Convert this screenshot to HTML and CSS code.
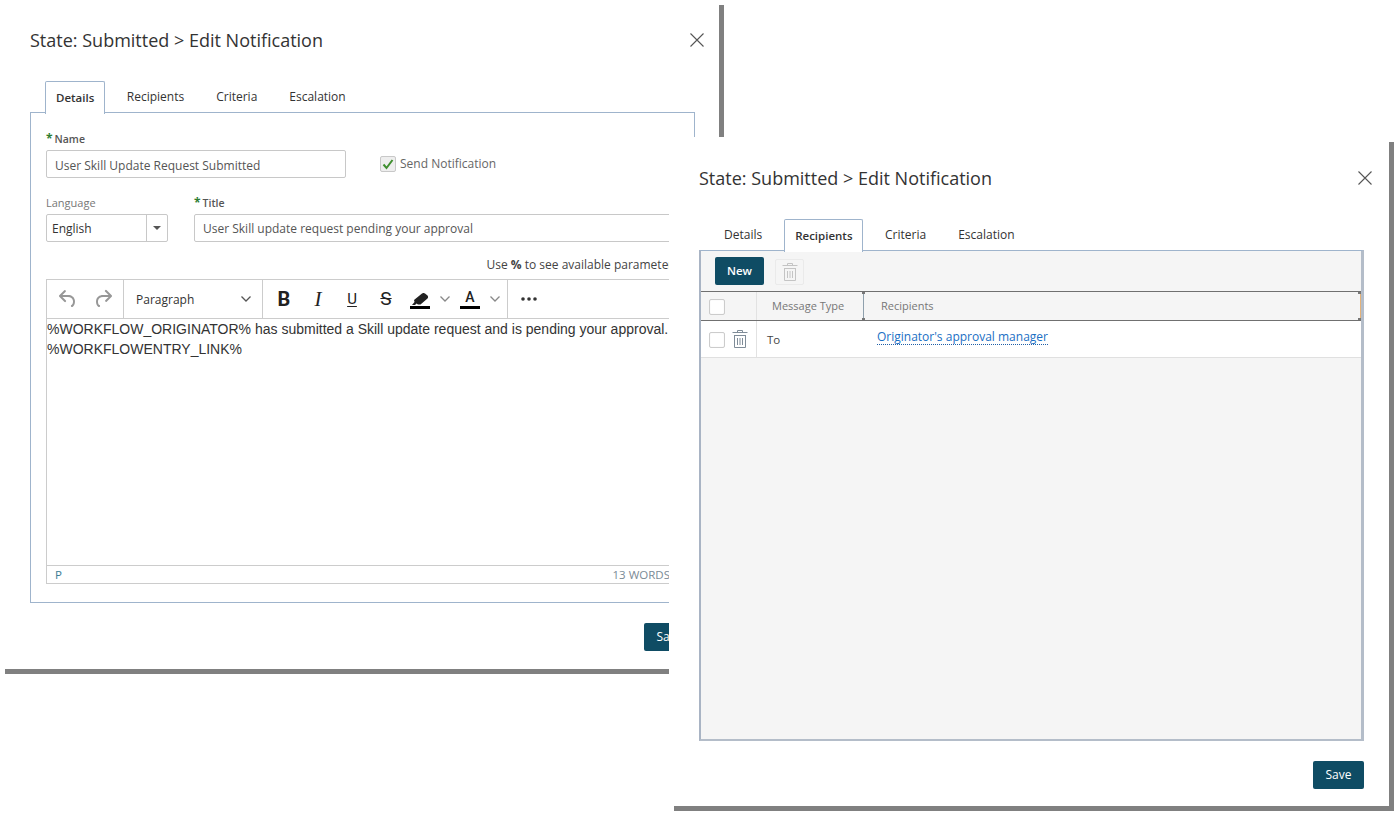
FILE: index.html
```html
<!DOCTYPE html>
<html lang="en">
<head>
<meta charset="utf-8">
<title>Edit Notification</title>
<link rel="stylesheet" href="styles.css">
</head>
<body>
<section class="window window-details">
  <header class="win-head">
    <h1 class="win-title">State: Submitted &gt; Edit Notification</h1>
    <svg class="close" viewBox="0 0 14 14" width="14" height="14"><path d="M.5.5l13 13M13.5.5l-13 13"/></svg>
  </header>
  <nav class="tabs">
    <span class="tab active">Details</span>
    <span class="tab">Recipients</span>
    <span class="tab">Criteria</span>
    <span class="tab">Escalation</span>
  </nav>
  <div class="panel panel-form">
    <label class="field-label req-label"><b class="star">*</b>Name</label>
    <div class="name-row">
      <div class="input name-input">User Skill Update Request Submitted</div>
      <div class="check-wrap">
        <span class="checkbox"><svg viewBox="0 0 16 16" width="16" height="16"><path class="tick" d="M3.500 8.500l3 3.500 6-8"/></svg></span>
        <span class="check-label">Send Notification</span>
      </div>
    </div>
    <div class="lang-row">
      <div class="lang-col">
        <label class="field-label plain-label">Language</label>
        <div class="select">
          <span class="select-value">English</span>
          <span class="select-btn"><i class="caret"></i></span>
        </div>
      </div>
      <div class="title-col">
        <label class="field-label req-label"><b class="star">*</b>Title</label>
        <div class="input title-input">User Skill update request pending your approval</div>
      </div>
    </div>
    <p class="hint">Use <b>%</b> to see available parameters</p>
    <div class="editor">
      <div class="toolbar">
        <div class="tool-group history">
          <svg class="ico muted" viewBox="0 0 24 24" width="24" height="24"><path d="M6.400 8H12c3.700 0 6.200 2 6.800 5.100.6 2.700-.4 5.600-2.300 6.800a1 1 0 0 1-1-1.800c1.100-.6 1.800-2.700 1.400-4.600-.5-2.100-2.100-3.500-4.900-3.500H6.400l3.300 3.300a1 1 0 1 1-1.400 1.400l-5-5a1 1 0 0 1 0-1.400l5-5a1 1 0 0 1 1.400 1.400L6.400 8z"/></svg>
          <svg class="ico muted" viewBox="0 0 24 24" width="24" height="24"><path d="M17.600 10H12c-2.800 0-4.400 1.400-4.900 3.500-.4 2 .3 4 1.400 4.600a1 1 0 1 1-1 1.800c-2-1.200-2.900-4.100-2.300-6.800.6-3 3-5.100 6.800-5.100h5.600l-3.300-3.300a1 1 0 1 1 1.400-1.400l5 5a1 1 0 0 1 0 1.400l-5 5a1 1 0 0 1-1.400-1.400l3.300-3.300z"/></svg>
        </div>
        <div class="tool-group block-select">
          <span>Paragraph</span>
          <svg class="chev" viewBox="0 0 10 6" width="10" height="6"><path d="M.5.5L5 5 9.500.5"/></svg>
        </div>
        <div class="tool-group format">
          <span class="fmt fmt-b">B</span>
          <span class="fmt fmt-i">I</span>
          <span class="fmt fmt-u">U</span>
          <span class="fmt fmt-s">S</span>
          <span class="color-tool first-color">
            <span class="swatch">
              <svg viewBox="0 0 18 12" width="18" height="12"><path class="marker" d="M1 12l2.500-3-.5-2L11 .5c1-.7 2-.7 3 0l2.500 2c.8.8.8 2 0 3L9.500 11.500H7L5.500 10.500 4 12z"/></svg>
            </span>
            <svg class="chev light" viewBox="0 0 10 6" width="10" height="6"><path d="M.5.5L5 5 9.500.5"/></svg>
          </span>
          <span class="color-tool">
            <span class="swatch letter">A</span>
            <svg class="chev light" viewBox="0 0 10 6" width="10" height="6"><path d="M.5.5L5 5 9.500.5"/></svg>
          </span>
        </div>
        <div class="tool-group more">
          <svg viewBox="0 0 16 4" width="16" height="4"><circle cx="2" cy="2" r="1.800"/><circle cx="8" cy="2" r="1.800"/><circle cx="14" cy="2" r="1.800"/></svg>
        </div>
      </div>
      <div class="edit-body">
        <p>%WORKFLOW_ORIGINATOR% has submitted a Skill update request and is pending your approval.</p>
        <p>%WORKFLOWENTRY_LINK%</p>
      </div>
      <div class="statusbar"><span class="path">P</span><span class="words">13 WORDS</span></div>
    </div>
  </div>
  <div class="actions"><button class="btn">Save</button></div>
</section>

<section class="window window-recipients">
  <header class="win-head">
    <h1 class="win-title">State: Submitted &gt; Edit Notification</h1>
    <svg class="close" viewBox="0 0 14 14" width="14" height="14"><path d="M.5.5l13 13M13.5.5l-13 13"/></svg>
  </header>
  <nav class="tabs">
    <span class="tab">Details</span>
    <span class="tab active">Recipients</span>
    <span class="tab">Criteria</span>
    <span class="tab">Escalation</span>
  </nav>
  <div class="panel panel-grid">
    <div class="grid-tools">
      <button class="btn btn-new">New</button>
      <span class="icon-btn">
        <svg class="trash faint" viewBox="0 0 16 18" width="16" height="18"><path d="M5.500 2.500v-2h5v2M.5 2.500h15M2 5.500h12M2.500 5.500v12h11v-12M5.500 8v7M8 8v7M10.500 8v7"/></svg>
      </span>
    </div>
    <div class="grid-head">
      <span class="cell cell-check"><i class="box"></i></span>
      <span class="cell cell-type">Message Type</span>
      <span class="cell cell-rec">Recipients</span>
    </div>
    <div class="grid-row">
      <span class="cell cell-check">
        <i class="box"></i>
        <svg class="trash" viewBox="0 0 16 18" width="16" height="18"><path d="M5.500 2.500v-2h5v2M.5 2.500h15M2 5.500h12M2.500 5.500v12h11v-12M5.500 8v7M8 8v7M10.500 8v7"/></svg>
      </span>
      <span class="cell cell-type">To</span>
      <span class="cell cell-rec"><a class="rec-link">Originator's approval manager</a></span>
    </div>
  </div>
  <div class="actions"><button class="btn">Save</button></div>
</section>
</body>
</html>
```
FILE: styles.css
```css
* { box-sizing: border-box; }
html, body { margin: 0; height: 100%; }
body { background: #fff; font-family: "Open Sans", "Liberation Sans", sans-serif; color: #333; overflow: hidden; }

.window { position: absolute; background: #fff; box-shadow: 5px 5px 0 #808080; display: flex; flex-direction: column; overflow: hidden; }
.window-details { left: 0; top: 0; width: 719px; height: 669px; }
.window-recipients { left: 669px; top: 137px; width: 720px; height: 669px; }

.win-head { height: 81px; padding: 0 15px 0 30px; display: flex; justify-content: space-between; align-items: flex-start; flex: none; }
.window-recipients .win-head { height: 82px; padding: 1px 17px 0 30px; }
.win-title { margin: 27px 0 0; font-size: 18px; line-height: 26px; font-weight: 400; color: #333; }
.close { margin-top: 33px; }
.close path { stroke: #555; fill: none; stroke-width: 1.100; }

.tabs { display: flex; height: 32px; padding-left: 39px; flex: none; position: relative; z-index: 1; }
.tab { font-size: 12px; line-height: 30px; padding: 0 15px; color: #333; border: 1px solid transparent; border-bottom: 0; height: 32px; }
.tab.active { font-size: 11.500px; font-weight: 600; padding: 0 9.500px 0 10px; margin: 0 6px; border-color: #9fb4cc; background: #fff; border-radius: 2px 2px 0 0; height: 33px; line-height: 32px; }

.panel { border: 1px solid #9fb4cc; margin: -1px 24px 0 30px; flex: none; }
.panel-form { height: 491px; padding: 16px 15px 0; width: 665px; }
.field-label { display: block; font-size: 10.500px; line-height: 20px; height: 20px; }
.req-label { font-weight: 600; color: #555; }
.star { color: #2e7d32; font-weight: 700; margin-right: 2px; font-size: 12px; }
.plain-label { color: #777; font-size: 11px; }

.input { height: 28px; border: 1px solid #c8c8c8; border-radius: 2px; font-size: 12px; line-height: 27px; padding: 0 8px; color: #555; background: #fff; white-space: nowrap; }
.name-row { display: flex; align-items: flex-start; margin-top: 1px; }
.name-input { width: 300px; flex: none; line-height: 29px; }
.check-wrap { display: flex; align-items: center; margin: 5px 0 0 34px; }
.checkbox { width: 16px; height: 16px; border: 1px solid #c8c8c8; border-radius: 2px; background: #eee; display: block; }
.checkbox svg { display: block; margin: -1px; }
.tick { fill: none; stroke: #3f8f2f; stroke-width: 2; }
.check-label { font-size: 12px; color: #666; margin: 1px 0 0 4px; line-height: 16px; }

.lang-row { display: flex; margin-top: 15px; }
.lang-col { width: 122px; flex: none; }
.title-col { margin-left: 26px; flex: none; width: 485px; }
.select { height: 28px; margin-top: 1px; border: 1px solid #c8c8c8; border-radius: 2px; display: flex; font-size: 12px; line-height: 27px; color: #333; }
.select-value { flex: 1; padding-left: 5px; }
.select-btn { width: 21px; border-left: 1px solid #c8c8c8; display: flex; align-items: center; justify-content: center; }
.caret { width: 0; height: 0; border: 4px solid transparent; border-top-color: #555; border-bottom: 0; }
.title-input { margin-top: 1px; }

.hint { margin: 14px 0 0; height: 23px; font-size: 12px; line-height: 17px; color: #444; text-align: right; white-space: nowrap; }

.editor { height: 305px; border: 1px solid #ccc; display: flex; flex-direction: column; }
.toolbar { height: 39px; border-bottom: 1px solid #ccc; display: flex; flex: none; }
.tool-group { display: flex; align-items: center; border-right: 1px solid #ccc; flex: none; }
.history { width: 77px; padding-left: 9px; gap: 11px; }
.ico { fill: #757575; flex: none; }
.muted { opacity: .75; }
.block-select { width: 139px; padding: 0 11px 0 12px; justify-content: space-between; font-size: 12px; color: #333; }
.chev { fill: none; stroke: #555; stroke-width: 1.300; flex: none; }
.chev.light { stroke: #888; }
.format { width: 245px; padding-left: 4px; }
.fmt { width: 34px; text-align: center; line-height: 24px; color: #222; flex: none; }
.fmt-b { font-family: "Roboto", "Liberation Sans", sans-serif; font-weight: 700; font-size: 20px; }
.fmt-i { font-family: "Liberation Serif", serif; font-style: italic; font-size: 21px; }
.fmt-u { font-family: "Roboto", "Liberation Sans", sans-serif; font-size: 15px; text-decoration: underline; text-underline-offset: 2px; }
.fmt-s { font-family: "Roboto", "Liberation Sans", sans-serif; font-size: 19px; text-decoration: line-through; }
.color-tool { display: flex; align-items: center; flex: none; width: 50px; gap: 10px; }
.first-color { margin-left: 7px; }
.swatch { width: 20px; height: 20px; border-bottom: 3px solid #000; display: flex; justify-content: center; align-items: flex-end; flex: none; }
.swatch svg { display: block; margin-bottom: 1px; }
.marker { fill: #222; }
.letter { font-family: "Roboto", "Liberation Sans", sans-serif; font-size: 14px; line-height: 17px; font-weight: 500; color: #222; height: 20px; }
.more { border: 0; padding-left: 13px; }
.more circle { fill: #333; }
.edit-body { flex: 1; font-family: "Liberation Sans", sans-serif; font-size: 14px; line-height: 20px; color: #333; white-space: nowrap; }
.edit-body p { margin: 0; }
.statusbar { height: 18px; flex: none; border-top: 1px solid #ccc; display: flex; justify-content: space-between; padding: 0 8px; font-size: 11.500px; line-height: 18px; color: #7a8a96; }
.path { color: #3a7d96; }

.actions { display: flex; justify-content: flex-end; margin: 20px 24px 0 0; flex: none; }
.window-recipients .actions { margin-right: 25px; }
.btn { height: 28px; width: 51px; border: 0; border-radius: 2px; background: #0f4c64; color: #fff; font: 500 12px/28px "Open Sans", sans-serif; padding: 0; }
.btn-new { width: 49px; font-weight: 600; font-size: 11.500px; }

.panel-grid { height: 491px; background: #f5f5f5; border-color: #9fb4cc; border-left: 2px solid #a9b4c4; border-right: 3px solid #b4bdc9; border-bottom: 2px solid #b4bdc9; margin-right: 25px; }
.grid-tools { display: flex; align-items: flex-start; height: 40px; padding: 6px 0 0 14px; }
.icon-btn { width: 29px; height: 26px; margin: 2px 0 0 11px; border: 1px solid #eaeaea; border-radius: 2px; display: flex; align-items: center; justify-content: center; }
.trash { fill: none; stroke: #7f8c98; stroke-width: 1; flex: none; }
.trash.faint { stroke: #c4c4c4; }
.grid-head, .grid-row { display: flex; }
.grid-head { height: 30px; border-top: 1px solid #707070; border-bottom: 1px solid #707070; font-size: 11px; color: #777; }
.grid-head .cell-type, .grid-head .cell-rec { padding-bottom: 2px; }
.grid-row { height: 37px; background: #fff; border-bottom: 1px solid #e0e0e0; font-size: 11.500px; color: #444; }
.cell { display: flex; align-items: center; }
.cell-check { width: 56px; flex: none; padding-left: 8px; gap: 7px; border-right: 1px solid #e2e2e2; }
.box { width: 16px; height: 16px; margin-top: 2px; border: 1px solid #ccc; border-radius: 2px; background: #fff; display: block; flex: none; box-shadow: inset 0 0 1px #ddd; }
.cell-type { width: 107px; flex: none; padding-left: 15px; position: relative; }
.grid-row .cell-type { padding-left: 10px; padding-top: 1px; }
.grid-head .cell-rec { position: relative; }
.grid-head .cell-type::after, .grid-head .cell-rec::after { content: ""; position: absolute; top: 0; bottom: 0; right: 0; width: 1px; background: #8fa0ad; }
.grid-head .cell-rec::after { background: #e3b27a; right: 0; }
.grid-head .cell-type::before, .grid-head .cell-rec::before { content: ""; position: absolute; top: 0; bottom: 0; right: -1px; width: 3px; z-index: 1; background: linear-gradient(#777, #777) top / 3px 2px no-repeat, linear-gradient(#777, #777) bottom / 3px 2px no-repeat; }
.grid-head .cell-rec::before { right: 0; }
.cell-rec { flex: 1; padding-left: 17px; }
.grid-row .cell-rec { padding-left: 13px; padding-bottom: 4px; }
.rec-link { color: #1a6fc4; border-bottom: 1px dotted #1f5fa8; line-height: 14px; font-size: 12px; }
```
